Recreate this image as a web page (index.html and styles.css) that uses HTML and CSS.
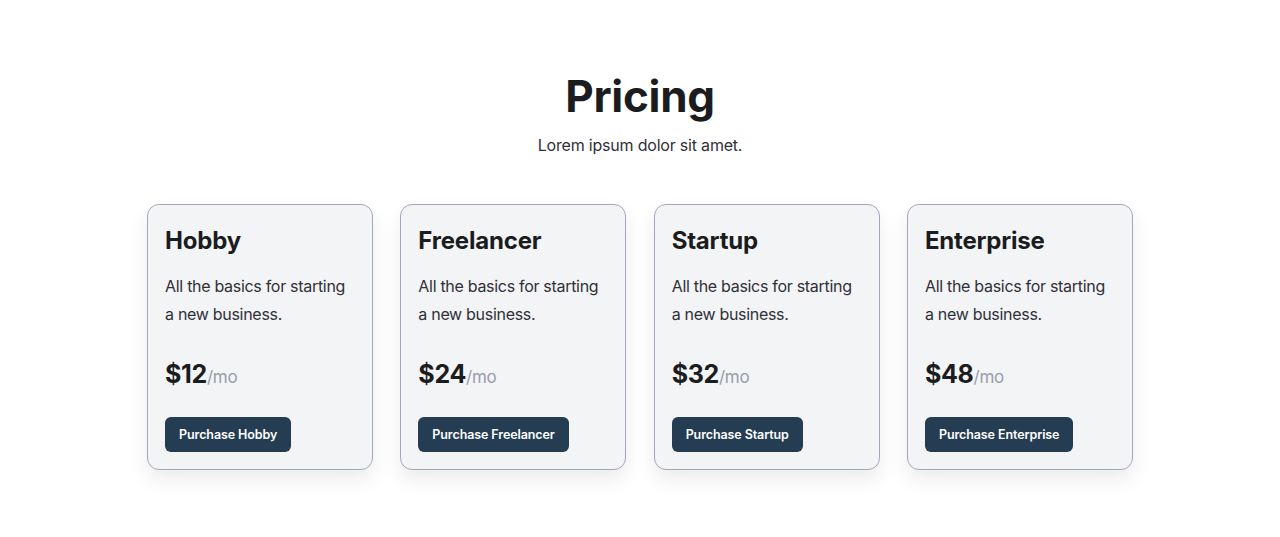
FILE: index.html
```html
<!DOCTYPE html>
<html>
<head>
<meta charset="utf-8">
<link rel="stylesheet" href="styles.css">
</head>
<body>
<section class="pricing">
  <h1 class="title">Pricing</h1>
  <p class="subtitle">Lorem ipsum dolor sit amet.</p>
  <div class="cards">
    <div class="card">
      <h2 class="plan">Hobby</h2>
      <p class="desc">All the basics for starting a new business.</p>
      <p class="price"><span class="amount">$12</span><span class="per">/mo</span></p>
      <button class="buy">Purchase Hobby</button>
    </div>
    <div class="card">
      <h2 class="plan">Freelancer</h2>
      <p class="desc">All the basics for starting a new business.</p>
      <p class="price"><span class="amount">$24</span><span class="per">/mo</span></p>
      <button class="buy">Purchase Freelancer</button>
    </div>
    <div class="card">
      <h2 class="plan">Startup</h2>
      <p class="desc">All the basics for starting a new business.</p>
      <p class="price"><span class="amount">$32</span><span class="per">/mo</span></p>
      <button class="buy">Purchase Startup</button>
    </div>
    <div class="card">
      <h2 class="plan">Enterprise</h2>
      <p class="desc">All the basics for starting a new business.</p>
      <p class="price"><span class="amount">$48</span><span class="per">/mo</span></p>
      <button class="buy">Purchase Enterprise</button>
    </div>
  </div>
</section>
</body>
</html>
```
FILE: styles.css
```css
* { box-sizing: border-box; }
html, body { margin: 0; padding: 0; background: #ffffff; }
body {
  font-family: Inter, "Noto Sans", sans-serif;
  color: #1b1c20;
}
.pricing {
  display: flex;
  flex-direction: column;
  align-items: center;
  padding: 70px 0 60px;
}
.title {
  margin: 0;
  font-size: 44px;
  line-height: 52px;
  font-weight: 700;
  letter-spacing: -0.3px;
}
.subtitle {
  margin: 11px 0 0;
  font-size: 16px;
  line-height: 24px;
  color: #2f3038;
  letter-spacing: -0.2px;
}
.cards {
  display: flex;
  gap: 27.3px;
  margin-top: 47px;
}
.card {
  width: 226px;
  height: 266px;
  background: #f3f4f6;
  border: 1px solid #a4a7bb;
  border-radius: 12px;
  padding: 22px 17px 0;
  box-shadow: 0 10px 20px rgba(0, 0, 0, 0.08);
}
.plan {
  margin: 0;
  font-size: 24px;
  line-height: 28px;
  font-weight: 700;
  letter-spacing: -0.2px;
}
.desc {
  margin: 17px 0 0;
  font-size: 16px;
  line-height: 28px;
  color: #2f3038;
  letter-spacing: -0.3px;
}
.price {
  margin: 30px 0 0;
  line-height: 32px;
}
.amount {
  font-size: 25px;
  font-weight: 700;
  letter-spacing: -0.3px;
}
.per {
  font-size: 17px;
  color: #9a9dab;
  letter-spacing: -0.3px;
}
.buy {
  margin-top: 24px;
  display: block;
  height: 35px;
  padding: 0 14px;
  background: #243d52;
  color: #ffffff;
  border: 0;
  border-radius: 6px;
  font-family: inherit;
  font-size: 12.5px;
  font-weight: 600;
  letter-spacing: -0.1px;
  cursor: pointer;
}
```
